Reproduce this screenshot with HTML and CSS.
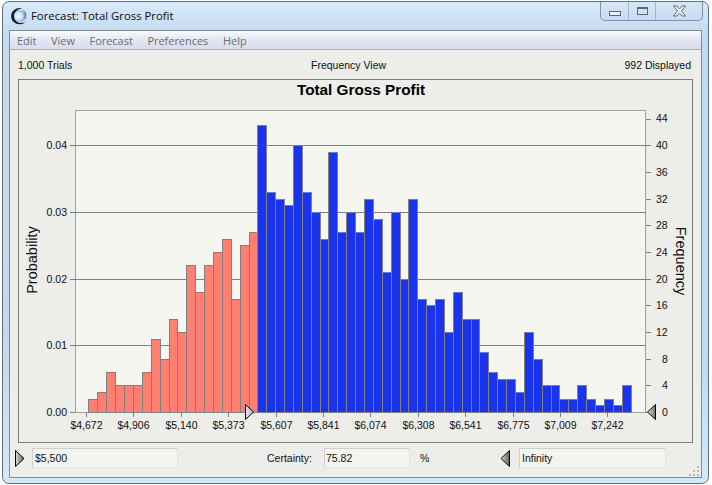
FILE: index.html
```html
<!DOCTYPE html>
<html lang="en">
<head>
<meta charset="utf-8">
<title>Forecast: Total Gross Profit</title>
<link rel="stylesheet" href="styles.css">
</head>
<body>
<div class="window">
  <header class="titlebar">
    <svg class="app-icon" width="18" height="18" viewBox="0 0 18 18">
      <defs>
        <radialGradient id="orb" cx="0.42" cy="0.5" r="0.62">
          <stop offset="0" stop-color="#f2f8fd"/>
          <stop offset="0.55" stop-color="#cfe3f4"/>
          <stop offset="1" stop-color="#3f82c6"/>
        </radialGradient>
      </defs>
      <circle cx="9.500" cy="9" r="5.800" fill="url(#orb)"/>
      <path class="app-ring" d="M12 1.300C7 .2 1.200 3.400 1.200 9.200c0 4.800 4 8 8.600 8 2.600 0 4.800-1 6-2.600-1.600 1.200-3.400 1.600-5.400 1.400C6.600 15.600 3.900 12.800 4 9c.1-3.600 3.600-7 8-7.700z"/>
      <path class="app-arc" d="M12 2.500c2.800 1 4.500 3.500 4.300 6.500-.1 2-1 3.700-2.300 4.800 1-1.400 1.500-3 1.400-4.800C15.300 6.200 14 3.800 12 2.500z"/>
    </svg>
    <span class="title-text">Forecast: Total Gross Profit</span>
    <div class="caption-buttons">
      <div class="cap cap-min"><span class="min-glyph"></span></div>
      <div class="cap cap-max"><span class="max-glyph"></span></div>
      <div class="cap cap-close">
        <svg width="17" height="14" viewBox="0 0 17 14">
          <path class="x-glyph" d="M2.500 2h3.500l2.500 3 2.500-3h3.500l-4 5 4 5h-3.500l-2.500-3-2.500 3h-3.500l4-5z"/>
        </svg>
      </div>
    </div>
  </header>

  <main class="client">
    <nav class="menubar">
      <span>Edit</span><span>View</span><span>Forecast</span><span>Preferences</span><span>Help</span>
    </nav>
    <div class="info-row">
      <span>1,000 Trials</span>
      <span class="info-mid">Frequency View</span>
      <span class="info-right">992 Displayed</span>
    </div>

    <section class="chart-frame">
      <svg class="chart" width="673" height="362" viewBox="19 80 673 362">
        <defs>
          <linearGradient id="slider-light" x1="0" y1="0" x2="1" y2="0">
            <stop offset="0" stop-color="#e6e6f0"/>
            <stop offset="1" stop-color="#b4b4cc"/>
          </linearGradient>
          <linearGradient id="slider-dark" x1="0" y1="0" x2="1" y2="0">
            <stop offset="0" stop-color="#e0e0e0"/>
            <stop offset="1" stop-color="#707070"/>
          </linearGradient>
        </defs>

        <text class="chart-title" x="361" y="95">Total Gross Profit</text>

        <rect class="plot" x="75.500" y="110.500" width="570" height="302"/>

        <g class="grid">
          <path d="M70 145.500H646M70 212.500H646M70 279.500H646M70 345.500H646M70 412.500H75"/>
          <path d="M646 119.500H651M646 145.500H651M646 172.500H651M646 199.500H651M646 225.500H651M646 252.500H651M646 279.500H651M646 305.500H651M646 332.500H651M646 359.500H651M646 385.500H651M646 412.500H651"/>
          <path d="M86.500 412V417M133.500 412V417M181.500 412V417M228.500 412V417M276.500 412V417M323.500 412V417M370.500 412V417M418.500 412V417M465.500 412V417M513.500 412V417M560.500 412V417M607.500 412V417"/>
        </g>

        <g class="bars-red">
          <rect x="88.500" y="399.500" width="9" height="13"/>
          <rect x="97.500" y="392.500" width="9" height="20"/>
          <rect x="106.500" y="372.500" width="9" height="40"/>
          <rect x="115.500" y="385.500" width="9" height="27"/>
          <rect x="124.500" y="385.500" width="9" height="27"/>
          <rect x="133.500" y="385.500" width="9" height="27"/>
          <rect x="142.500" y="372.500" width="9" height="40"/>
          <rect x="151.500" y="339.500" width="9" height="73"/>
          <rect x="160.500" y="359.500" width="9" height="53"/>
          <rect x="169.500" y="319.500" width="8" height="93"/>
          <rect x="177.500" y="332.500" width="9" height="80"/>
          <rect x="186.500" y="265.500" width="9" height="147"/>
          <rect x="195.500" y="292.500" width="9" height="120"/>
          <rect x="204.500" y="265.500" width="9" height="147"/>
          <rect x="213.500" y="252.500" width="9" height="160"/>
          <rect x="222.500" y="239.500" width="9" height="173"/>
          <rect x="231.500" y="299.500" width="9" height="113"/>
          <rect x="240.500" y="245.500" width="9" height="167"/>
          <rect x="249.500" y="232.500" width="8" height="180"/>
        </g>
        <g class="bars-blue">
          <rect x="257.500" y="125.500" width="9" height="287"/>
          <rect x="266.500" y="192.500" width="9" height="220"/>
          <rect x="275.500" y="199.500" width="9" height="213"/>
          <rect x="284.500" y="205.500" width="9" height="207"/>
          <rect x="293.500" y="145.500" width="9" height="267"/>
          <rect x="302.500" y="192.500" width="9" height="220"/>
          <rect x="311.500" y="212.500" width="9" height="200"/>
          <rect x="320.500" y="239.500" width="8" height="173"/>
          <rect x="328.500" y="152.500" width="9" height="260"/>
          <rect x="337.500" y="232.500" width="9" height="180"/>
          <rect x="346.500" y="212.500" width="9" height="200"/>
          <rect x="355.500" y="232.500" width="9" height="180"/>
          <rect x="364.500" y="199.500" width="9" height="213"/>
          <rect x="373.500" y="219.500" width="9" height="193"/>
          <rect x="382.500" y="272.500" width="9" height="140"/>
          <rect x="391.500" y="212.500" width="9" height="200"/>
          <rect x="400.500" y="279.500" width="8" height="133"/>
          <rect x="408.500" y="199.500" width="9" height="213"/>
          <rect x="417.500" y="299.500" width="9" height="113"/>
          <rect x="426.500" y="305.500" width="9" height="107"/>
          <rect x="435.500" y="299.500" width="9" height="113"/>
          <rect x="444.500" y="332.500" width="9" height="80"/>
          <rect x="453.500" y="292.500" width="9" height="120"/>
          <rect x="462.500" y="319.500" width="9" height="93"/>
          <rect x="471.500" y="319.500" width="8" height="93"/>
          <rect x="479.500" y="352.500" width="9" height="60"/>
          <rect x="488.500" y="372.500" width="9" height="40"/>
          <rect x="497.500" y="379.500" width="9" height="33"/>
          <rect x="506.500" y="379.500" width="9" height="33"/>
          <rect x="515.500" y="392.500" width="9" height="20"/>
          <rect x="524.500" y="332.500" width="9" height="80"/>
          <rect x="533.500" y="359.500" width="9" height="53"/>
          <rect x="542.500" y="385.500" width="9" height="27"/>
          <rect x="551.500" y="385.500" width="8" height="27"/>
          <rect x="559.500" y="399.500" width="9" height="13"/>
          <rect x="568.500" y="399.500" width="9" height="13"/>
          <rect x="577.500" y="385.500" width="9" height="27"/>
          <rect x="586.500" y="399.500" width="9" height="13"/>
          <rect x="595.500" y="405.500" width="9" height="7"/>
          <rect x="604.500" y="399.500" width="9" height="13"/>
          <rect x="613.500" y="405.500" width="9" height="7"/>
          <rect x="622.500" y="385.500" width="9" height="27"/>
        </g>

        <g class="tick-label anchor-end">
          <text x="67" y="149">0.04</text>
          <text x="67" y="216">0.03</text>
          <text x="67" y="283">0.02</text>
          <text x="67" y="349">0.01</text>
          <text x="67" y="416">0.00</text>
        </g>
        <g class="tick-label">
          <text x="656" y="122">44</text>
          <text x="656" y="149">40</text>
          <text x="656" y="176">36</text>
          <text x="656" y="203">32</text>
          <text x="656" y="229">28</text>
          <text x="656" y="256">24</text>
          <text x="656" y="283">20</text>
          <text x="656" y="309">16</text>
          <text x="656" y="336">12</text>
          <text x="662" y="363">8</text>
          <text x="662" y="389">4</text>
          <text x="662" y="416">0</text>
        </g>
        <g class="tick-label anchor-mid">
          <text x="86.500" y="429">$4,672</text>
          <text x="133.500" y="429">$4,906</text>
          <text x="181.500" y="429">$5,140</text>
          <text x="228.500" y="429">$5,373</text>
          <text x="276.500" y="429">$5,607</text>
          <text x="323.500" y="429">$5,841</text>
          <text x="370.500" y="429">$6,074</text>
          <text x="418.500" y="429">$6,308</text>
          <text x="465.500" y="429">$6,541</text>
          <text x="513.500" y="429">$6,775</text>
          <text x="560.500" y="429">$7,009</text>
          <text x="607.500" y="429">$7,242</text>
        </g>

        <text class="axis-title" transform="translate(37 260) rotate(-90)">Probability</text>
        <text class="axis-title" transform="translate(676 261) rotate(90)">Frequency</text>

        <path class="slider" fill="url(#slider-light)" d="M245.500 404.500V419.500L253.500 412z"/>
        <path class="slider" fill="url(#slider-dark)" d="M655.500 404.500V419.500L647.500 412z"/>
      </svg>
    </section>

    <footer class="controls">
      <svg class="handle" width="10" height="17" viewBox="0 0 10 17">
        <defs>
          <linearGradient id="handle-r" x1="0" y1="0" x2="1" y2="0">
            <stop offset="0" stop-color="#d8d8d8"/>
            <stop offset="1" stop-color="#606060"/>
          </linearGradient>
        </defs>
        <path class="slider" fill="url(#handle-r)" d="M.5 .5V16.500L9 8.500z"/>
      </svg>
      <div class="field field-low">$5,500</div>
      <span class="cert-label">Certainty:</span>
      <div class="field field-cert">75.82</div>
      <span class="pct">%</span>
      <svg class="handle handle-hi" width="10" height="17" viewBox="0 0 10 17">
        <path class="slider" fill="url(#handle-r)" d="M9.500 .5V16.500L1 8.500z"/>
      </svg>
      <div class="field field-high">Infinity</div>
      <svg class="grip" width="10" height="10" viewBox="0 0 10 10">
        <path class="grip-dots" d="M8 0h2v2H8zM4 4h2v2H4zM8 4h2v2H8zM0 8h2v2H0zM4 8h2v2H4zM8 8h2v2H8z"/>
      </svg>
    </footer>
  </main>
</div>
</body>
</html>
```

FILE: styles.css
```css
* { box-sizing: border-box; }

html, body {
  margin: 0;
  padding: 0;
  background: #ffffff;
}

body {
  width: 712px;
  height: 485px;
  overflow: hidden;
  font-family: "Liberation Sans", Arial, sans-serif;
  font-size: 10.5px;
  color: #101010;
  padding: 1px 0 0 2px;
}

.window {
  width: 707px;
  height: 483px;
  border: 1px solid #5f6f7e;
  border-radius: 7px;
  background: linear-gradient(180deg, #d9eafa 0, #c3dbf0 30px, #c0d9ef 70%, #d3e8f7 100%);
  padding: 0 6px 5px;
  display: flex;
  flex-direction: column;
}

.titlebar {
  height: 28px;
  display: flex;
  align-items: flex-start;
  flex: none;
}

.app-icon { margin: 5px 0 0 1px; flex: none; }
.app-ring { fill: #14181f; }
.app-arc { fill: #3f6f9f; }

.title-text {
  margin: 6px 0 0 3px;
  font-family: "Open Sans", sans-serif;
  font-size: 11.35px;
  line-height: 16px;
  color: #0c0c0c;
}

.caption-buttons {
  margin-left: auto;
  margin-right: -1px;
  width: 103px;
  height: 19px;
  display: flex;
  border: 1px solid #7f93a7;
  border-top: 0;
  border-radius: 0 0 5px 5px;
  background: linear-gradient(180deg, #d6e7f6, #c6dcf0);
  flex: none;
}

.cap {
  display: flex;
  align-items: center;
  justify-content: center;
  border-right: 1px solid #9fb4c8;
}
.cap-min { width: 28px; }
.cap-max { width: 27px; }
.cap-close { flex: 1; border-right: 0; }

.min-glyph {
  width: 12px;
  height: 5px;
  margin-top: 4px;
  border: 1px solid #56677a;
  background: #e8eff6;
}
.max-glyph {
  width: 11px;
  height: 8px;
  border: 1px solid #56677a;
  border-top-width: 2px;
  background: #d6e4f2;
}
.x-glyph {
  fill: #eef3f8;
  stroke: #5b6c7e;
  stroke-width: 1;
}

.client {
  flex: 1;
  min-height: 0;
  border: 1px solid #7e8b98;
  background-color: #eeeeea;
  background-image: repeating-conic-gradient(#f1f1ed 0 25%, #e9e9e5 0 50%);
  background-size: 2px 2px;
  display: flex;
  flex-direction: column;
}

.menubar {
  height: 19px;
  flex: none;
  display: flex;
  align-items: center;
  gap: 14.600px;
  padding-left: 7px;
  font-family: "Open Sans", sans-serif;
  font-size: 10.950px;
  color: #6c6c6c;
  background: linear-gradient(180deg, #f8fafd 0, #e4e8f3 45%, #d8dcec 100%);
  border-bottom: 1px solid #a9adb4;
}

.info-row {
  height: 29px;
  flex: none;
  display: grid;
  grid-template-columns: 293px auto 1fr;
  align-items: center;
  padding: 1px 10px 0 8px;
}
.info-mid { text-align: center; }
.info-right { text-align: right; }

.chart-frame {
  margin: 0 8px 0 8px;
  height: 364px;
  flex: none;
  border: 1px solid #7b7b7b;
}

.chart { display: block; }

.chart-title {
  font-family: "Liberation Sans", Arial, sans-serif;
  font-size: 15.300px;
  font-weight: bold;
  text-anchor: middle;
  fill: #000;
}

.plot { fill: #f6f6f0; stroke: #a0a0a0; stroke-width: 1; }
.grid path { fill: none; stroke: #808080; stroke-width: 1; }
.bars-red rect { fill: #ff8070; stroke: #808080; stroke-width: 1; }
.bars-blue rect { fill: #1a34ee; stroke: #808080; stroke-width: 1; }

.tick-label text {
  font-family: "Liberation Sans", Arial, sans-serif;
  font-size: 10.5px;
  fill: #101010;
}
.anchor-end text { text-anchor: end; }
.anchor-mid text { text-anchor: middle; }

.axis-title {
  font-family: "Liberation Sans", Arial, sans-serif;
  font-size: 14.500px;
  text-anchor: middle;
  fill: #101010;
}

.slider { stroke: #000; stroke-width: 1; }

.controls {
  flex: 1;
  min-height: 0;
  display: flex;
  align-items: flex-start;
  padding: 5px 0 0 5px;
  position: relative;
}

.handle { flex: none; margin-top: 2px; }

.field {
  height: 20px;
  background: #f5f5ef;
  border: 1px solid #dfe3ea;
  border-top-color: #cfcfcf;
  border-left-color: #cfcfcf;
  line-height: 18px;
  padding-left: 2px;
  flex: none;
}
.field-low { width: 146px; margin-left: 7px; }
.field-cert { width: 86px; margin-left: 9px; padding-left: 1px; }
.field-high { width: 147px; margin-left: 9px; }

.cert-label { margin-left: 89px; line-height: 20px; width: 48px; }
.pct { margin-left: 10px; line-height: 20px; width: 71px; }
.handle-hi { margin-left: 9px; flex: none; }

.grip {
  position: absolute;
  right: 2px;
  bottom: 1px;
}
.grip-dots { fill: #b9b9b9; }
```
